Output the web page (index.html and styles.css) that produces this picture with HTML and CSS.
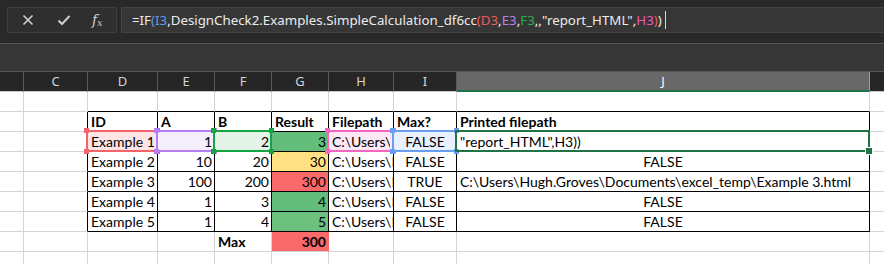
FILE: index.html
```html
<!DOCTYPE html>
<html>
<head>
<meta charset="utf-8">
<link rel="stylesheet" href="styles.css">
</head>
<body>
<div class="app">
  <div class="topbar">
    <div class="btngroup">
      <svg class="ico" width="12" height="12" viewBox="0 0 12 12"><path d="M1.5 1.5 L10.5 10.5 M10.5 1.5 L1.5 10.5" stroke="#d0d0d0" stroke-width="1.6" fill="none"/></svg>
      <svg class="ico" width="14" height="12" viewBox="0 0 14 12"><path d="M1.5 6.5 L5 10 L12.5 2" stroke="#d0d0d0" stroke-width="2" fill="none"/></svg>
      <span class="fx">f<sub>x</sub></span>
    </div>
    <div class="formula"><span>=IF</span><span class="c-blue">(I3</span><span>,DesignCheck2.Examples.SimpleCalculation_df6cc</span><span class="c-red">(</span><span class="c-red">D3</span><span>,</span><span class="c-purple">E3</span><span>,</span><span class="c-green">F3</span><span>,,"report_HTML",</span><span class="c-pink">H3</span><span class="c-red">)</span><span>)</span><span class="cursor"></span></div>
  </div>
  <div class="band"></div>
  <div class="sheet">
    <div class="hd"></div><div class="hd">C</div><div class="hd">D</div><div class="hd">E</div><div class="hd">F</div><div class="hd">G</div><div class="hd">H</div><div class="hd">I</div><div class="hd hd-sel">J</div><div class="hd hd-k"></div>

    <div class="c"></div><div class="c"></div><div class="c tb-b"></div><div class="c tb-b"></div><div class="c tb-b"></div><div class="c tb-b"></div><div class="c tb-b"></div><div class="c tb-b"></div><div class="c tb-b"></div><div class="c"></div>

    <div class="c"></div><div class="c tb-r"></div><div class="c t b">ID</div><div class="c t b">A</div><div class="c t b">B</div><div class="c t b">Result</div><div class="c t b">Filepath</div><div class="c t b">Max?</div><div class="c t b">Printed filepath</div><div class="c"></div>

    <div class="c"></div><div class="c tb-r"></div><div class="c t ref r-red"><span class="txt">Example 1</span></div><div class="c t num ref r-purple"><span class="txt">1</span></div><div class="c t num ref r-green"><span class="txt">2</span></div><div class="c t num g1">3</div><div class="c t ref r-pink"><span class="txt">C:\Users\Hugh.Groves\Documents\excel_temp\Example 1.html</span></div><div class="c t ctr ref r-blue"><span class="txt">FALSE</span></div><div class="c t active"><span class="txt">"report_HTML",H3))</span></div><div class="c"></div>

    <div class="c"></div><div class="c tb-r"></div><div class="c t">Example 2</div><div class="c t num">10</div><div class="c t num">20</div><div class="c t num y1">30</div><div class="c t">C:\Users\Hugh.Groves\Documents\excel_temp\Example 2.html</div><div class="c t ctr">FALSE</div><div class="c t ctr">FALSE</div><div class="c"></div>

    <div class="c"></div><div class="c tb-r"></div><div class="c t">Example 3</div><div class="c t num">100</div><div class="c t num">200</div><div class="c t num r1">300</div><div class="c t">C:\Users\Hugh.Groves\Documents\excel_temp\Example 3.html</div><div class="c t ctr">TRUE</div><div class="c t">C:\Users\Hugh.Groves\Documents\excel_temp\Example 3.html</div><div class="c"></div>

    <div class="c"></div><div class="c tb-r"></div><div class="c t">Example 4</div><div class="c t num">1</div><div class="c t num">3</div><div class="c t num g1">4</div><div class="c t">C:\Users\Hugh.Groves\Documents\excel_temp\Example 4.html</div><div class="c t ctr">FALSE</div><div class="c t ctr">FALSE</div><div class="c"></div>

    <div class="c"></div><div class="c tb-r"></div><div class="c t">Example 5</div><div class="c t num">1</div><div class="c t num">4</div><div class="c t num g2">5</div><div class="c t">C:\Users\Hugh.Groves\Documents\excel_temp\Example 5.html</div><div class="c t ctr">FALSE</div><div class="c t ctr">FALSE</div><div class="c"></div>

    <div class="c"></div><div class="c"></div><div class="c"></div><div class="c"></div><div class="c b">Max</div><div class="c num b r1 nofill-grid">300</div><div class="c"></div><div class="c"></div><div class="c"></div><div class="c"></div>

    <div class="c"></div><div class="c"></div><div class="c"></div><div class="c"></div><div class="c"></div><div class="c"></div><div class="c"></div><div class="c"></div><div class="c"></div><div class="c"></div>
  </div>
</div>
</body>
</html>
```

FILE: styles.css
```css
* { box-sizing: border-box; }
html, body { margin: 0; padding: 0; }
body { background: #262626; width: 884px; height: 264px; overflow: hidden; }

.app { width: 884px; }

.topbar {
  height: 44px;
  background: #292929;
  border-bottom: 1px solid #555555;
  display: flex;
  align-items: flex-start;
  padding: 7px 0 0 7px;
  gap: 4px;
}
.btngroup {
  width: 110px;
  height: 26px;
  background: #2f2f2f;
  border: 1px solid #3e3e3e;
  display: flex;
  align-items: center;
  padding-left: 14px;
}
.btngroup .ico { display: block; }
.btngroup .ico:nth-child(1) { margin-right: 23px; }
.btngroup .ico:nth-child(2) { margin-right: 21px; }
.fx {
  font-family: "DejaVu Serif", "Liberation Serif", serif;
  font-style: italic;
  color: #d0d0d0;
  font-size: 14px;
  line-height: 1;
}
.fx sub { font-size: 9px; vertical-align: -1px; }

.formula {
  flex: 1;
  height: 26px;
  background: #363636;
  border: 1px solid #444444;
  border-right: none;
  padding-left: 10px;
  font-family: "Noto Sans", "Open Sans", sans-serif;
  font-size: 13.3px;
  line-height: 23px;
  color: #ececec;
  white-space: nowrap;
  display: flex;
  align-items: center;
}
.c-blue { color: #5e9cf2; }
.c-red { color: #ee5a5e; }
.c-purple { color: #b184f4; }
.c-green { color: #2cae4f; }
.c-pink { color: #ee55b6; }
.cursor { display: inline-block; width: 1px; height: 18px; background: #d8d8d8; margin-left: 3px; }

.band {
  height: 28px;
  background: #363636;
  border-bottom: 1px solid #555555;
}

.sheet {
  display: grid;
  grid-template-columns: 24px 64px 70px 57px 57px 57px 65px 63px 413px 15px;
  grid-template-rows: 20px repeat(9, 20px);
  background: #ffffff;
  font-family: Lato, "Liberation Sans", sans-serif;
  font-size: 14px;
  color: #000;
}
.hd {
  background: #262626;
  color: #d4d4d4;
  font-family: "Noto Sans", "Open Sans", sans-serif;
  font-size: 13px;
  text-align: center;
  line-height: 19px;
  border-right: 1px solid #5a5a5a;
  border-bottom: 1px solid #c8c8c8;
}
.hd-sel { background: #686868; color: #ffffff; border-bottom: 2px solid #217346; border-right: 1px solid #a0a0a0; }
.hd-k { border-right: none; }

.c {
  border-right: 1px solid #d4d4d4;
  border-bottom: 1px solid #d4d4d4;
  padding: 0 3px;
  line-height: 20px;
  white-space: nowrap;
  overflow: hidden;
}
.tb-b { border-bottom-color: #000; }
.tb-r { border-right-color: #000; }
.t { border-right-color: #000; border-bottom-color: #000; }
.b { font-weight: bold; }
.num { text-align: right; padding-right: 2px; }
.ctr { text-align: center; }

.txt { display: block; overflow: hidden; white-space: nowrap; }

.g1 { background: #63be7b; }
.g2 { background: #6cc17e; }
.y1 { background: #ffe083; }
.r1 { background: #f8696b; }
.nofill-grid { border-right-color: #f8696b; }

.ref { position: relative; overflow: visible; }
.ref::before {
  content: "";
  position: absolute;
  top: -2px; left: -2px; right: -1px; bottom: -1px;
  border: 2px solid var(--rc);
  pointer-events: none;
}
.ref::after {
  content: "";
  position: absolute;
  top: -4px; left: -4px; right: -3px; bottom: -3px;
  background:
    linear-gradient(var(--rc), var(--rc)) left top / 5px 5px no-repeat,
    linear-gradient(var(--rc), var(--rc)) right top / 5px 5px no-repeat,
    linear-gradient(var(--rc), var(--rc)) left bottom / 5px 5px no-repeat,
    linear-gradient(var(--rc), var(--rc)) right bottom / 5px 5px no-repeat;
  pointer-events: none;
}
.r-red { --rc: #f0646a; background: #fde5e6; }
.r-purple { --rc: #b47ef2; background: #f4effd; }
.r-green { --rc: #14a540; background: #e4f3e7; }
.r-pink { --rc: #f265c0; background: #fde8f5; }
.r-blue { --rc: #6a9ef2; background: #e9f0fd; }

.active { position: relative; overflow: visible; }
.active::before {
  content: "";
  position: absolute;
  top: -2px; left: -2px; right: -1px; bottom: -1px;
  border: 2px solid #217346;
}
.active::after {
  content: "";
  position: absolute;
  right: -4px; bottom: -4px;
  width: 6px; height: 6px;
  background: #217346;
  border: 1px solid #ffffff;
}
```
